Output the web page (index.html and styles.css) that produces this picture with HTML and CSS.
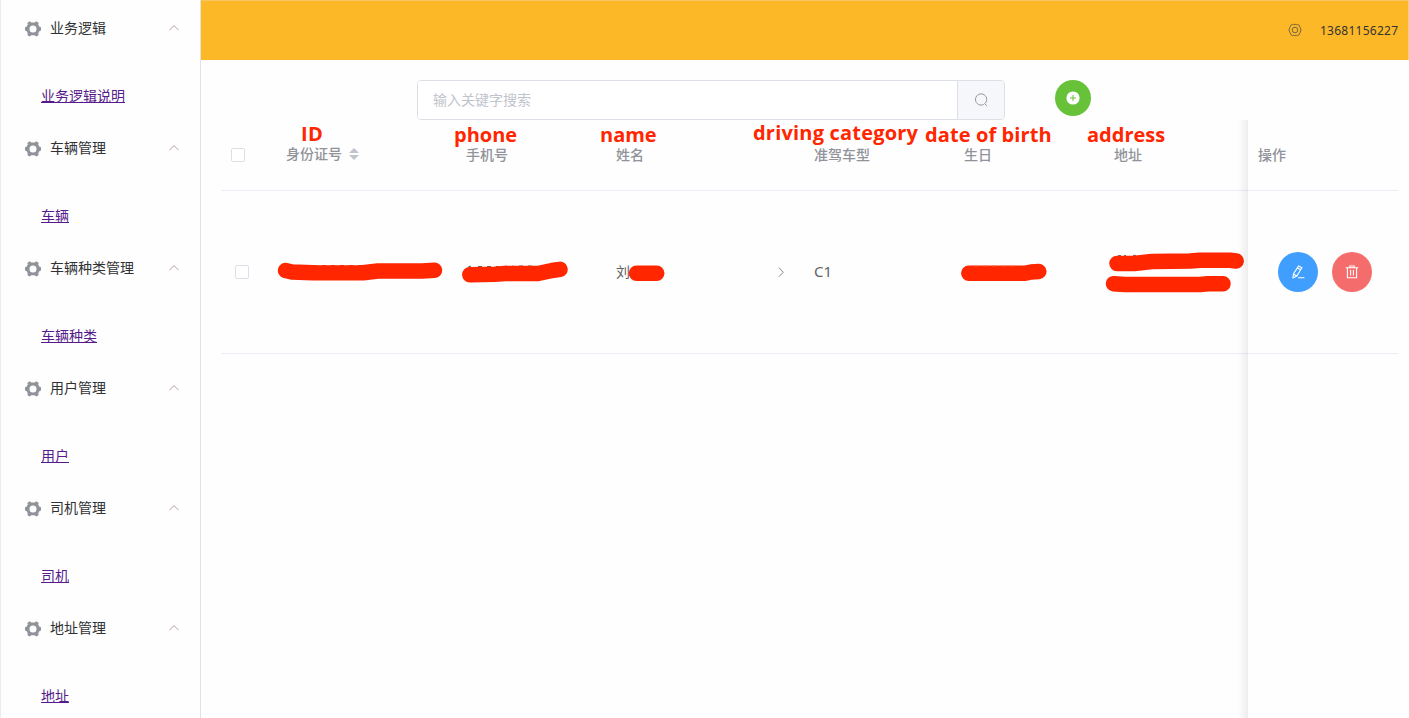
FILE: index.html
```html
<!DOCTYPE html>
<html lang="zh-CN">
<head>
<meta charset="utf-8">
<title>司机管理</title>
<link rel="stylesheet" href="styles.css">
</head>
<body>
<svg class="defs" aria-hidden="true">
  <symbol id="gear" viewBox="0 0 16 16">
    <path fill-rule="evenodd" d="M4.8 0.3 L6.3 1.6 H9.7 L11.2 0.3 L13.6 1.7 L13.2 3.5 L14.5 5.8 L16 6.3 V9.5 L14.5 10 L13.2 12.4 L13.6 14.2 L11.2 15.6 L9.7 14.3 H6.3 L4.8 15.6 L2.4 14.2 L2.8 12.4 L1.5 10 L0 9.5 V6.3 L1.5 5.8 L2.8 3.5 L2.4 1.7 Z M8 4.5 A3.5 3.5 0 1 0 8 11.5 A3.5 3.5 0 1 0 8 4.5 Z"/>
  </symbol>
  <symbol id="up" viewBox="0 0 12 12">
    <path d="M1.5 8 L6 3.7 L10.5 8"/>
  </symbol>
</svg>
<div class="app">
  <aside class="sidebar">
    <section class="group">
      <div class="title"><svg class="gear"><use href="#gear"/></svg><span>业务逻辑</span><svg class="arrow"><use href="#up"/></svg></div>
      <div class="item"><a href="#">业务逻辑说明</a></div>
    </section>
    <section class="group">
      <div class="title"><svg class="gear"><use href="#gear"/></svg><span>车辆管理</span><svg class="arrow"><use href="#up"/></svg></div>
      <div class="item"><a href="#">车辆</a></div>
    </section>
    <section class="group">
      <div class="title"><svg class="gear"><use href="#gear"/></svg><span>车辆种类管理</span><svg class="arrow"><use href="#up"/></svg></div>
      <div class="item"><a href="#">车辆种类</a></div>
    </section>
    <section class="group">
      <div class="title"><svg class="gear"><use href="#gear"/></svg><span>用户管理</span><svg class="arrow"><use href="#up"/></svg></div>
      <div class="item"><a href="#">用户</a></div>
    </section>
    <section class="group">
      <div class="title"><svg class="gear"><use href="#gear"/></svg><span>司机管理</span><svg class="arrow"><use href="#up"/></svg></div>
      <div class="item"><a href="#">司机</a></div>
    </section>
    <section class="group">
      <div class="title"><svg class="gear"><use href="#gear"/></svg><span>地址管理</span><svg class="arrow"><use href="#up"/></svg></div>
      <div class="item"><a href="#">地址</a></div>
    </section>
  </aside>
  <div class="page">
    <header class="topbar">
      <svg class="setting" viewBox="0 0 14 14">
        <path d="M4.3 1.4 Q5.6 2.2 7 1.2 Q8.4 2.2 9.7 1.4 L11.3 2.4 Q11.2 4.2 12.5 4.9 Q12.2 6 13.2 7 Q12.2 8 12.5 9.1 Q11.2 9.8 11.3 11.6 L9.7 12.6 Q8.4 11.8 7 12.8 Q5.6 11.8 4.3 12.6 L2.7 11.6 Q2.8 9.8 1.5 9.1 Q1.8 8 0.8 7 Q1.8 6 1.5 4.9 Q2.8 4.2 2.7 2.4 Z"/>
        <circle cx="7" cy="7" r="2.8"/>
      </svg>
      <span class="user">13681156227</span>
    </header>
    <main class="main">
      <div class="tools">
        <div class="search">
          <input type="text" placeholder="输入关键字搜索">
          <button class="find" aria-label="搜索">
            <svg viewBox="0 0 14 14"><path d="M9.8 11.4 A5.6 5.6 0 1 1 11.3 10.2 M10.3 10.3 L12.8 12.7"/></svg>
          </button>
        </div>
        <button class="add" aria-label="添加">
          <svg viewBox="0 0 14 14"><circle cx="7" cy="7" r="6.6"/><path d="M4 7 H10 M7 4 V10"/></svg>
        </button>
      </div>
      <div class="table">
        <div class="row head">
          <div class="cell check"><i class="box"></i></div>
          <div class="cell sortable"><b class="note id">ID</b><span>身份证号</span><span class="sort"><i class="asc"></i><i class="desc"></i></span></div>
          <div class="cell"><b class="note phone">phone</b><span>手机号</span></div>
          <div class="cell"><b class="note name">name</b><span>姓名</span></div>
          <div class="cell"><b class="note category">driving category</b><span>准驾车型</span></div>
          <div class="cell"><b class="note birth">date of birth</b><span>生日</span></div>
          <div class="cell"><b class="note address">address</b><span>地址</span></div>
          <div class="cell ops"><span>操作</span></div>
        </div>
        <div class="row record">
          <div class="cell check"><i class="box"></i></div>
          <div class="cell">
            <svg class="mask" width="180" height="60" viewBox="276 242 180 60">
              <path class="m" d="M285.5 270.5 L292 272 L313 272.7 H363 L378 271 H422 L434.5 270.3"/>
              <path class="hint" d="M317 265.5 H362"/>
            </svg>
          </div>
          <div class="cell">
            <svg class="mask" width="150" height="60" viewBox="456 242 150 60">
              <path class="glyph" d="M468 267 l3 -1 M478 266.5 h4 M487 266.5 h4 M496 266.5 h3 M505 266.2 h2 M512 266.2 h2 M519 266 h4 M528 266 h4"/>
              <path class="m" d="M469.8 274.7 L495 274.3 L505 273.5 H538 L552 270.5 L560 269.3"/>
            </svg>
          </div>
          <div class="cell person">
            <span>刘</span>
            <svg class="mask" width="42" height="60" viewBox="628 242 42 60"><path class="m" d="M636.5 273.3 H656.7"/></svg>
            <svg class="expand" viewBox="0 0 12 12"><path d="M4 1.7 L8.3 6.2 L4 10.7"/></svg>
          </div>
          <div class="cell"><span class="kind">C1</span></div>
          <div class="cell">
            <svg class="mask" width="150" height="60" viewBox="954 242 150 60">
              <path class="m" d="M968.8 273.3 H1025 L1031 272 L1038.8 271.5"/>
              <path class="hint" d="M974 266 H1018"/>
            </svg>
          </div>
          <div class="cell">
            <svg class="mask" width="144" height="60" viewBox="1104 242 144 60">
              <path class="glyph" d="M1118 255.6 h3 M1124 255.6 h2 M1133 255.4 h3"/>
              <path class="m" d="M1117 263.5 H1134 L1152 261.5 L1190 261 L1200 260.3 H1230 L1236.2 261"/>
              <path class="m" d="M1113.5 283.7 L1125 284.5 H1200 L1208 283.7 H1223"/>
            </svg>
          </div>
          <div class="cell ops">
            <button class="round edit" aria-label="编辑">
              <svg viewBox="0 0 14 14"><path d="M7.6 0.9 L10.9 2.8 L5.8 11 L2 12.9 L2.4 9 Z M6.4 2.9 L9.7 4.8 M2.4 9 L5.8 11 M7 12.8 H13.4"/></svg>
            </button>
            <button class="round del" aria-label="删除">
              <svg viewBox="0 0 14 14"><path d="M0.8 2.8 H13.2 M4.8 2.6 V1 H9.2 V2.6 M2.4 3 V12.8 H11.6 V3 M5.6 5 V10.4 M8.4 5 V10.4"/></svg>
            </button>
          </div>
        </div>
        <div class="fixed-edge"></div>
      </div>
    </main>
  </div>
</div>
</body>
</html>
```
FILE: styles.css
```css
* { box-sizing: border-box; }
body {
  margin: 0;
  font-family: "Open Sans", "Noto Sans CJK SC", sans-serif;
  font-size: 14px;
  background: #fefefe;
  overflow: hidden;
}
button { padding: 0; border: 0; cursor: pointer; }
.defs { position: absolute; width: 0; height: 0; }
.app { display: flex; height: 100vh; overflow: hidden; }

.sidebar {
  width: 201px;
  flex: none;
  border-left: 1px solid #ececec;
  border-right: 1px solid #e2e2e4;
  overflow: hidden;
}
.group { height: 120px; }
.title {
  display: flex;
  align-items: center;
  height: 56px;
  padding: 0 20px 0 24px;
  color: #303133;
}
.title span { padding-bottom: 2px; }
.gear { width: 16px; height: 16px; margin: 2px 9px 0 0; fill: #909399; }
.arrow {
  width: 12px;
  height: 12px;
  margin-left: auto;
  fill: none;
  stroke: #b3a196;
}
.item { padding: 15px 0 0 40px; line-height: 50px; }
.item a { color: #551a8b; }

.page { flex: 1; min-width: 0; display: flex; flex-direction: column; }
.topbar {
  display: flex;
  align-items: center;
  justify-content: flex-end;
  height: 60px;
  flex: none;
  padding-right: 10px;
  background: #fdb827;
  border-top: 1px solid #f6c663;
  border-right: 1px solid #fbcf70;
  color: #333;
  font-size: 12px;
}
.setting { width: 14px; height: 14px; margin: 0 18px 2px 0; fill: none; stroke: #776644; }
.user { font-family: "Noto Sans", sans-serif; width: 78px; letter-spacing: 0.25px; }

.main { flex: 1; display: flex; flex-direction: column; padding: 20px 10px 0 20px; }
.tools { display: flex; height: 40px; flex: none; padding-left: 196px; }
.search {
  display: flex;
  width: 588px;
  border: 1px solid #dcdfe6;
  border-radius: 4px;
  overflow: hidden;
}
.search input {
  flex: 1;
  min-width: 0;
  padding: 0 15px 2px;
  border: 0;
  outline: 0;
  background: #fff;
  font: inherit;
}
.search input::placeholder { color: #c0c4cc; }
.find {
  display: flex;
  align-items: center;
  justify-content: center;
  width: 47px;
  background: #f5f7fa;
  border-left: 1px solid #dcdfe6;
}
.find svg { width: 14px; height: 14px; fill: none; stroke: #909399; }
.add {
  display: flex;
  align-items: center;
  justify-content: center;
  width: 36px;
  height: 36px;
  margin-left: 50px;
  border-radius: 50%;
  background: #67c23a;
}
.add svg { width: 14px; height: 14px; fill: #fff; stroke: #67c23a; }
.add circle { stroke: none; }

.table { position: relative; flex: 1; width: 1177px; }
.row {
  display: grid;
  grid-template-columns: 55px 180px 150px 198px 150px 150px 144px 150px;
  border-bottom: 1px solid #ebeef5;
}
.head { height: 71px; color: #909399; font-weight: 500; }
.head .cell > span:not(.sort) { padding-bottom: 2px; }
.record { height: 163px; color: #606266; }
.cell { position: relative; display: flex; align-items: center; padding-left: 10px; }
.check { padding-left: 14px; }
.head .check { padding-left: 10px; }
.box { width: 14px; height: 14px; border: 1px solid #dcdfe6; border-radius: 2px; background: #fff; }
.head .sortable > span:not(.sort) { padding-bottom: 4px; }
.sort { display: flex; flex-direction: column; gap: 2px; margin: -2px 0 0 7px; }
.sort i { border: 5px solid transparent; }
.sort .asc { border-top: 0; border-bottom-color: #c0c4cc; }
.sort .desc { border-bottom: 0; border-top-color: #c0c4cc; }

.note {
  position: absolute;
  top: 2px;
  font: 700 20px/26px "Open Sans", sans-serif;
  color: #ff2600;
  white-space: nowrap;
}
.note.id { left: 25px; top: 1px; letter-spacing: 0.5px; }
.note.phone { left: -2px; }
.note.name { left: -6px; }
.note.category { left: -51px; top: 0; letter-spacing: 0.2px; }
.note.birth { left: -29px; letter-spacing: 0.1px; }
.note.address { left: -17px; }

.mask { flex: none; margin-left: -10px; fill: none; }
.m { stroke: #ff2600; stroke-width: 15.5; stroke-linecap: round; stroke-linejoin: round; }
.hint { stroke: #e8705c; stroke-width: 0.7; stroke-dasharray: 5 4; }
.glyph { stroke: #606266; stroke-width: 1; }
.person > span { padding-bottom: 2px; }
.person .mask { margin-left: -2px; }
.kind { padding-bottom: 2px; font: 15px "Noto Sans", sans-serif; }
.expand { width: 12px; height: 12px; margin-left: auto; margin-right: 17px; fill: none; stroke: #85878c; }

.ops { padding-left: 10px; }
.record .ops { padding-left: 30px; gap: 14px; }
.round {
  display: flex;
  align-items: center;
  justify-content: center;
  flex: none;
  width: 40px;
  height: 40px;
  border-radius: 50%;
}
.round svg { width: 14px; height: 14px; fill: none; stroke: #fff; stroke-width: 1.1; }
.edit { background: #409eff; }
.del { background: #f56c6c; }
.fixed-edge {
  position: absolute;
  top: 0;
  bottom: 0;
  left: 1017px;
  width: 10px;
  background: linear-gradient(to right, rgba(0, 0, 0, 0), rgba(0, 0, 0, 0.065));
}
```
